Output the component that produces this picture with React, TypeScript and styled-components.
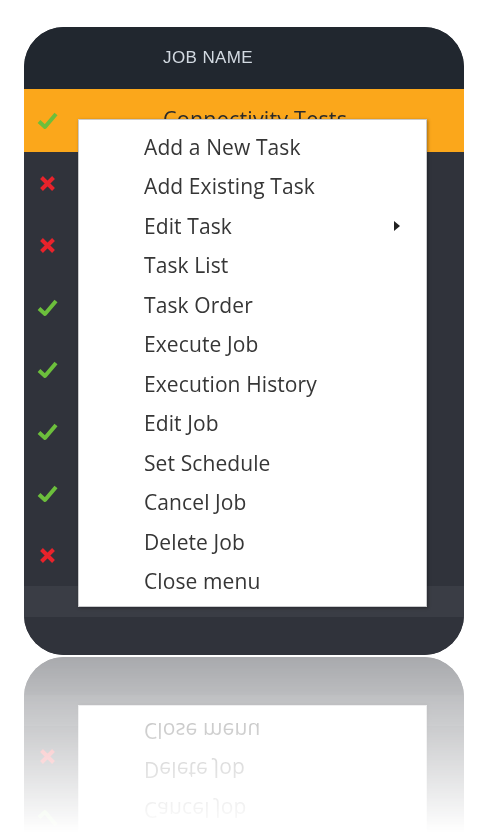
import React from 'react';
import styled, { createGlobalStyle } from 'styled-components';

type Status = 'ok' | 'fail';

const jobs: Status[] = ['ok', 'fail', 'fail', 'ok', 'ok', 'ok', 'ok', 'fail'];

const menuItems = [
  { label: 'Add a New Task' },
  { label: 'Add Existing Task' },
  { label: 'Edit Task', sub: true },
  { label: 'Task List' },
  { label: 'Task Order' },
  { label: 'Execute Job' },
  { label: 'Execution History' },
  { label: 'Edit Job' },
  { label: 'Set Schedule' },
  { label: 'Cancel Job' },
  { label: 'Delete Job' },
  { label: 'Close menu' },
];

const CheckIcon = () => (
  <svg width="21" height="19" viewBox="0 0 21 19">
    <path d="M2 10.5 L8 16 L19 3" fill="none" stroke="#6cbf3c" strokeWidth="4" strokeLinejoin="round" />
  </svg>
);

const CrossIcon = () => (
  <svg width="17" height="17" viewBox="0 0 17 17">
    <path d="M2.5 2.5 L14.5 14.5 M14.5 2.5 L2.5 14.5" stroke="#e8232b" strokeWidth="4" />
  </svg>
);

const App = () => {
  return (
    <>
      <GlobalStyle />
      <Page>
        <Panel>
          <Header>
            <IconCell />
            <HeaderTitle>JOB NAME</HeaderTitle>
          </Header>
          {jobs.map((status, i) => (
            <Row key={i} $active={i === 0}>
              <IconCell>{status === 'ok' ? <CheckIcon /> : <CrossIcon />}</IconCell>
              {i === 0 && <JobName>Connectivity Tests</JobName>}
            </Row>
          ))}
          <Band />
          <Footer />
          <Menu>
            {menuItems.map((item) => (
              <MenuItem key={item.label}>
                <span>{item.label}</span>
                {item.sub && <SubArrow />}
              </MenuItem>
            ))}
          </Menu>
        </Panel>
      </Page>
    </>
  );
};

const GlobalStyle = createGlobalStyle`
  body {
    margin: 0;
    background: #ffffff;
    font-family: "Open Sans", "Noto Sans", sans-serif;
  }
`;

const Page = styled.div`
  display: flex;
  padding: 27px 0 0 24px;
  height: 810px;
`;

const Panel = styled.div`
  position: relative;
  display: flex;
  flex-direction: column;
  width: 440px;
  height: 628px;
  border-radius: 40px;
  overflow: hidden;
  background: #30333b;
  -webkit-box-reflect: below 2px linear-gradient(to bottom, transparent 72%, rgba(255, 255, 255, 0.42) 100%);
`;

const Header = styled.div`
  display: flex;
  align-items: center;
  height: 62px;
  background: #21272f;
`;

const HeaderTitle = styled.span`
  margin-left: 93px;
  font-family: "Liberation Sans", Arial, sans-serif;
  font-size: 17px;
  letter-spacing: 0.4px;
  color: #d3dae2;
`;

const Row = styled.div<{ $active?: boolean }>`
  display: flex;
  align-items: center;
  height: ${(p) => (p.$active ? '63px' : '62px')};
  background: ${(p) => (p.$active ? '#fba71b' : '#30333b')};
`;

const IconCell = styled.div`
  display: flex;
  align-items: center;
  justify-content: center;
  width: 46px;
  height: 100%;
`;

const JobName = styled.span`
  margin-left: 93px;
  margin-top: -4px;
  font-size: 21.5px;
  letter-spacing: 0.2px;
  color: #2b2b2b;
`;

const Band = styled.div`
  height: 31px;
  background: #3a3d45;
`;

const Footer = styled.div`
  flex: 1;
  background: #30333b;
`;

const Menu = styled.ul`
  position: absolute;
  left: 54px;
  top: 92px;
  width: 347px;
  height: 474px;
  margin: 0;
  padding: 7px 0 5px;
  list-style: none;
  background: #ffffff;
  border: 1px solid #c9cacc;
  box-shadow: 1px 1px 3px rgba(0, 0, 0, 0.35);
`;

const MenuItem = styled.li`
  display: flex;
  align-items: center;
  justify-content: space-between;
  height: 39.5px;
  padding: 0 26px 0 65px;
  font-size: 21px;
  letter-spacing: 0.1px;
  color: #363636;
`;

const SubArrow = styled.span`
  width: 0;
  height: 0;
  border-top: 5px solid transparent;
  border-bottom: 5px solid transparent;
  border-left: 6px solid #222;
`;

export default App;
